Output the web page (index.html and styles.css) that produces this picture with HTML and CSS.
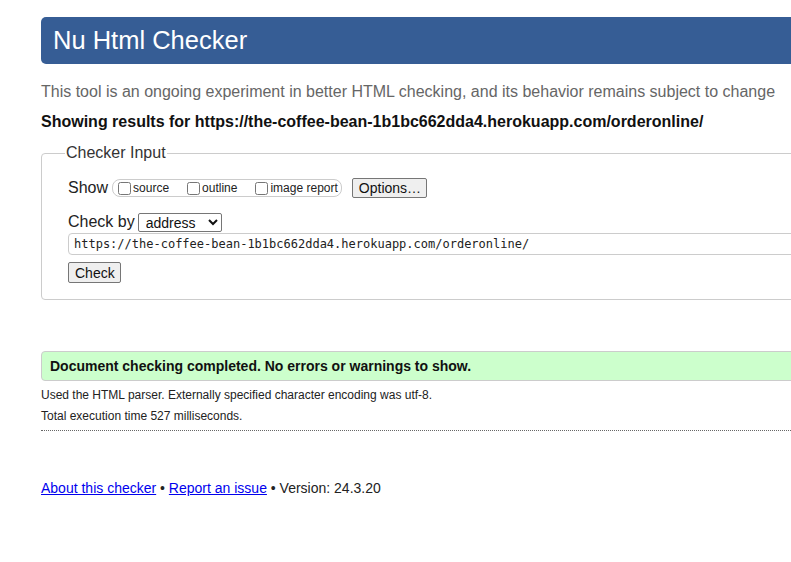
FILE: index.html
```html
<!DOCTYPE html>
<html lang="en">
<head>
<meta charset="utf-8">
<title>Nu Html Checker</title>
<link rel="stylesheet" href="styles.css">
</head>
<body>
<div class="page">
  <h1 class="banner">Nu Html Checker</h1>
  <p class="intro">This tool is an ongoing experiment in better HTML checking, and its behavior remains subject to change</p>
  <p class="showing">Showing results for https://the-coffee-bean-1b1bc662dda4.herokuapp.com/orderonline/</p>
  <fieldset class="checker">
    <legend>Checker Input</legend>
    <div class="row show-row">
      <span class="label">Show</span>
      <span class="opts">
        <label><input type="checkbox"><span>source</span></label>
        <label><input type="checkbox"><span>outline</span></label>
        <label><input type="checkbox"><span>image report</span></label>
      </span>
      <button class="btn" type="button">Options…</button>
    </div>
    <div class="row by-row">
      <span class="label">Check by</span>
      <select class="sel"><option>address</option></select>
    </div>
    <input class="url" type="text" value="https://the-coffee-bean-1b1bc662dda4.herokuapp.com/orderonline/">
    <div class="row">
      <button class="btn check" type="button">Check</button>
    </div>
  </fieldset>
  <p class="success">Document checking completed. No errors or warnings to show.</p>
  <p class="details">Used the HTML parser. Externally specified character encoding was utf-8.</p>
  <p class="details">Total execution time 527 milliseconds.</p>
  <hr class="dots">
  <p class="footer"><a href="#">About this checker</a> • <a href="#">Report an issue</a> • Version: 24.3.20</p>
</div>
</body>
</html>
```
FILE: styles.css
```css
html, body {
  margin: 0;
  padding: 0;
  overflow: hidden;
  background: #fff;
}
body {
  font-family: "Liberation Sans", Arial, sans-serif;
  color: #222;
}
.page {
  width: 800px;
  padding: 17px 0 0 41px;
}
.banner {
  margin: 0;
  height: 47px;
  box-sizing: border-box;
  padding: 8px 12px 0 12px;
  background: #365d95;
  color: #fff;
  font-size: 25.5px;
  font-weight: normal;
  line-height: 30px;
  border-radius: 5px;
}
.intro {
  margin: 18px 0 0 0;
  font-size: 16px;
  line-height: 20px;
  color: #666;
}
.showing {
  margin: 10px 0 0 0;
  font-size: 16px;
  line-height: 20px;
  font-weight: bold;
  color: #111;
}
.checker {
  margin: 12px 0 0 0;
  padding: 15px 26px 16px 26px;
  border: 1px solid #ccc;
  border-radius: 4px;
  min-width: 0;
  width: 800px;
  box-sizing: border-box;
}
.checker legend {
  padding: 0 1px;
  margin-left: -3px;
  font-size: 16px;
  color: #333;
}
.row {
  display: flex;
  align-items: center;
}
.label {
  font-size: 16px;
  color: #222;
}
.show-row {
  height: 22px;
}
.opts {
  display: inline-flex;
  align-items: center;
  margin-left: 4px;
  height: 16px;
  border: 1px solid #ccc;
  border-radius: 8px;
  padding: 0 3px 0 5px;
}
.opts label {
  display: inline-flex;
  align-items: center;
  font-size: 12px;
  color: #222;
  margin-right: 18px;
}
.opts label:last-child {
  margin-right: 0;
}
.opts input {
  margin: 0 2px 0 0;
  width: 13px;
  height: 13px;
}
.btn {
  font-family: "Liberation Sans", Arial, sans-serif;
  font-size: 14px;
  color: #111;
  background: #efefef;
  border: 1px solid #767676;
  border-radius: 2px;
  padding: 1px 6px;
  height: 20px;
  line-height: 16px;
}
.show-row .btn {
  margin-left: 10px;
  width: 75px;
}
.by-row {
  margin-top: 13px;
  height: 20px;
}
.sel {
  margin-left: 3px;
  font-family: "Liberation Sans", Arial, sans-serif;
  font-size: 14px;
  width: 84px;
  height: 19px;
  border: 1px solid #767676;
  border-radius: 2px;
  background: #fff;
  color: #111;
  padding: 0 0 0 3px;
}
.url {
  display: block;
  margin-top: 1px;
  width: 760px;
  height: 22px;
  box-sizing: border-box;
  border: 1px solid #ccc;
  border-radius: 4px;
  padding: 0 5px;
  font-family: "DejaVu Sans Mono", "Liberation Mono", monospace;
  font-size: 12px;
  color: #222;
}
.check {
  margin-top: 7px;
  width: 53px;
  height: 21px;
}
.success {
  margin: 51px 0 0 0;
  height: 30px;
  box-sizing: border-box;
  padding: 6px 8px;
  background: #ccffcc;
  border: 1px solid #ccc;
  border-radius: 4px;
  font-size: 14px;
  font-weight: bold;
  line-height: 17px;
  color: #111;
}
.details {
  margin: 7px 0 0 0;
  font-size: 12px;
  line-height: 15px;
  color: #222;
}
.details + .details {
  margin-top: 6px;
}
.dots {
  margin: 6px 0 0 0;
  border: 0;
  border-top: 1px dotted #666;
  height: 0;
}
.footer {
  margin: 49px 0 0 0;
  font-size: 14px;
  line-height: 17px;
  color: #222;
}
.footer a {
  color: #00e;
}
```
